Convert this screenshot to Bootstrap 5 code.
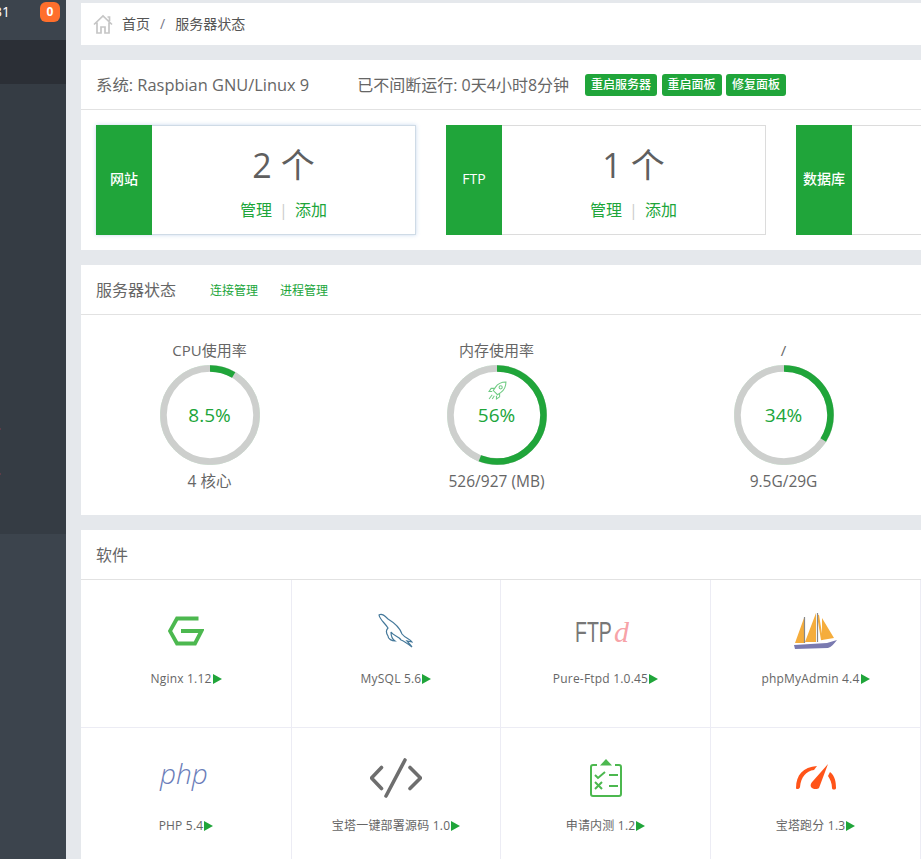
<!DOCTYPE html>
<html lang="zh">
<head>
    <meta charset="UTF-8">
    <title>服务器状态</title>
    <link href="https://cdn.jsdelivr.net/npm/bootstrap@5.3.3/dist/css/bootstrap.min.css" rel="stylesheet">
    <style>
        html, body { height: 859px; overflow: hidden; }
        body {
            background: #e5e8ec;
            color: #555;
            font-family: "Open Sans", "Noto Sans", "Noto Sans CJK SC", sans-serif;
            font-size: 14px;
            line-height: 20px;
        }
        .side-bar { width: 66px; height: 859px; background: #353c44; flex: none; position: relative; }
        .side-top { height: 40px; background: #3c444d; color: #fff; position: relative; overflow: hidden; }
        .side-num { position: absolute; left: -6px; top: 2px; font-size: 14px; }
        .side-badge { position: absolute; left: 40px; top: 2px; width: 20px; height: 20px; border-radius: 6px; background: #ff6f2c; font-size: 12px; font-weight: 700; line-height: 20px; text-align: center; }
        .side-active { height: 44px; background: #2b2f36; }
        .side-mid { height: 450px; }
        .side-low { height: 325px; background: #3c444d; }
        .side-dot { position: absolute; left: 0; width: 1px; height: 2px; background: #5c3c48; }
        .side-dot-a { top: 428px; }
        .side-dot-b { top: 473px; }
        .main-wrap { width: 840px; margin-left: 15px; padding-top: 3px; flex: none; }
        .crumb-bar { height: 42px; background: #fff; margin-bottom: 15px; padding-left: 12px; font-size: 14px; color: #555; }
        .crumb-home { margin-right: 9px; }
        .crumb-sep { color: #778; margin: 0 10px; }
        .sheet { background: #fff; margin-bottom: 15px; }
        .sheet-head { height: 50px; border-bottom: 1px solid #e2e2e2; padding-left: 15px; font-size: 16px; color: #666; }
        .sys-name { font-size: 16.4px; }
        .up-gap { margin-left: 48px; }
        .act-btn { background: #20a53a; color: #fff; font-size: 12px; font-weight: 500; line-height: 22px; height: 22px; padding: 0 6px; border-radius: 3px; margin-right: 4.5px; }
        .act-first { margin-left: 16px; }
        .stat-row { padding: 15px; gap: 30px; height: 140px; width: 1100px; }
        .stat-box { width: 320px; height: 110px; border: 1px solid #dcdcdc; flex: none; }
        .stat-hot { border-color: #cfdbe6; box-shadow: 0 0 4px rgba(130,170,220,.45); }
        .stat-tag { width: 56px; height: 110px; margin: -1px 0 0 -1px; padding-bottom: 2px; background: #20a53a; color: #fff; font-size: 14px; font-weight: 500; flex: none; }
        .stat-body { flex: 1; text-align: center; }
        .stat-num { font-size: 34px; line-height: 40px; color: #5f5f5f; margin-top: 19px; }
        .stat-links { margin-top: 15px; font-size: 16px; line-height: 20px; color: #20a53a; }
        .stat-sep { color: #ccc; margin: 0 7px; font-size: 16px; }
        .head-link { color: #20a53a; font-size: 12px; margin-left: 22px; margin-top: 2px; }
        .head-link-first { margin-left: 34px; }
        .gauge-row { height: 200px; padding-top: 25px; }
        .gauge-cell { width: 287px; text-align: center; flex: none; color: #666; font-size: 15px; }
        .gauge-first { margin-left: -15px; }
        .gauge-ring { width: 100px; height: 100px; position: relative; margin: 5px auto 6px; }
        .gauge-val { position: absolute; inset: 0; display: flex; align-items: center; justify-content: center; color: #20a53a; font-size: 19px; }
        .gauge-rocket { position: absolute; left: 41px; top: 16px; }
        .gauge-foot { font-size: 15.5px; }
        .soft-grid { display: grid; grid-template-columns: 211px 209px 210px 210px; }
        .soft-cell { height: 148px; border-right: 1px solid #ececf4; border-bottom: 1px solid #ececf4; text-align: center; font-size: 12px; letter-spacing: .2px; color: #666; padding-top: 28px; }
        .soft-cell:nth-child(n+5) { padding-top: 27px; }
        .soft-icon { height: 46px; display: flex; align-items: center; justify-content: center; }
        .soft-name { margin-top: 15px; line-height: 20px; }
        .soft-arrow { display: inline-block; width: 0; height: 0; border-left: 9px solid #20a53a; border-top: 5.5px solid transparent; border-bottom: 5.5px solid transparent; vertical-align: -1px; margin-left: 1px; }
        .sheet-last { margin-bottom: 0; }
        .logo-ftp { font-family: "Liberation Sans", sans-serif; font-size: 30px; letter-spacing: 0; fill: #777; }
        .logo-d { font-family: "Liberation Serif", serif; font-style: italic; font-size: 30px; letter-spacing: 0; fill: #f58a90; fill-opacity: .8; }
        .logo-php { font-family: "Open Sans", sans-serif; font-style: italic; font-weight: 300; font-size: 28px; letter-spacing: 0; fill: #6a7db9; }
    </style>
</head>
<body>
<div class="d-flex">
    <div class="side-bar">
        <div class="side-top"><span class="side-num">31</span><span class="side-badge">0</span></div>
        <div class="side-active"></div>
        <div class="side-mid"></div>
        <div class="side-low"></div>
        <span class="side-dot side-dot-a"></span><span class="side-dot side-dot-b"></span>
    </div>
    <div class="main-wrap">
        <div class="crumb-bar d-flex align-items-center">
            <svg class="crumb-home" width="20" height="20" viewBox="0 0 20 20" fill="none" stroke="#c6c6c6" stroke-width="1.700"><path d="M1 10.500 10 2l9 8.500M4 8.500V19h4v-6h4v6h4V8.500M14.500 3h2v4"/></svg>
            <span>首页</span><span class="crumb-sep">/</span><span>服务器状态</span>
        </div>
        <div class="sheet overflow-hidden">
            <div class="sheet-head d-flex align-items-center">
                <span class="sys-name">系统: Raspbian GNU/Linux 9</span>
                <span class="up-gap">已不间断运行: 0天4小时8分钟</span>
                <span class="act-btn act-first">重启服务器</span><span class="act-btn">重启面板</span><span class="act-btn">修复面板</span>
            </div>
            <div class="stat-row d-flex">
                <div class="stat-box stat-hot d-flex">
                    <div class="stat-tag d-flex align-items-center justify-content-center">网站</div>
                    <div class="stat-body">
                        <div class="stat-num">2 个</div>
                        <div class="stat-links">管理<span class="stat-sep">|</span>添加</div>
                    </div>
                </div>
                <div class="stat-box d-flex">
                    <div class="stat-tag d-flex align-items-center justify-content-center">FTP</div>
                    <div class="stat-body">
                        <div class="stat-num">1 个</div>
                        <div class="stat-links">管理<span class="stat-sep">|</span>添加</div>
                    </div>
                </div>
                <div class="stat-box d-flex">
                    <div class="stat-tag d-flex align-items-center justify-content-center">数据库</div>
                    <div class="stat-body"></div>
                </div>
            </div>
        </div>
        <div class="sheet">
            <div class="sheet-head d-flex align-items-center">
                <span>服务器状态</span>
                <span class="head-link head-link-first">连接管理</span>
                <span class="head-link">进程管理</span>
            </div>
            <div class="gauge-row d-flex">
                <div class="gauge-cell gauge-first">
                    <div>CPU使用率</div>
                    <div class="gauge-ring">
                        <svg width="100" height="100" viewBox="0 0 100 100"><circle cx="50" cy="50" r="49.700" fill="none" stroke="#a9d6b3" stroke-width=".6"/><circle cx="50" cy="50" r="46.500" fill="none" stroke="#cdcfcd" stroke-width="6.500"/><circle cx="50" cy="50" r="46.500" fill="none" stroke="#20a53a" stroke-width="6.500" pathLength="100" stroke-dasharray="8.500 91.500" transform="rotate(-90 50 50)"/></svg>
                        <div class="gauge-val">8.5%</div>
                    </div>
                    <div class="gauge-foot">4 核心</div>
                </div>
                <div class="gauge-cell">
                    <div>内存使用率</div>
                    <div class="gauge-ring">
                        <svg width="100" height="100" viewBox="0 0 100 100"><circle cx="50" cy="50" r="49.700" fill="none" stroke="#a9d6b3" stroke-width=".6"/><circle cx="50" cy="50" r="46.500" fill="none" stroke="#cdcfcd" stroke-width="6.500"/><circle cx="50" cy="50" r="46.500" fill="none" stroke="#20a53a" stroke-width="6.500" pathLength="100" stroke-dasharray="56 44" transform="rotate(-90 50 50)"/></svg>
                        <svg class="gauge-rocket" width="19" height="19" viewBox="0 0 18 18" fill="none" stroke="#6fcb83" stroke-width="1"><path d="M17 1c-5 0-8 2-10 5l-2 3 4 4 3-2c3-2 5-5 5-10zM6 7H3L1 10h3M11 12v3l-3 2v-3M4 13l-3 4M6 14l-2 3"/><circle cx="12" cy="6" r="1.500"/></svg>
                        <div class="gauge-val">56%</div>
                    </div>
                    <div class="gauge-foot">526/927 (MB)</div>
                </div>
                <div class="gauge-cell">
                    <div>/</div>
                    <div class="gauge-ring">
                        <svg width="100" height="100" viewBox="0 0 100 100"><circle cx="50" cy="50" r="49.700" fill="none" stroke="#a9d6b3" stroke-width=".6"/><circle cx="50" cy="50" r="46.500" fill="none" stroke="#cdcfcd" stroke-width="6.500"/><circle cx="50" cy="50" r="46.500" fill="none" stroke="#20a53a" stroke-width="6.500" pathLength="100" stroke-dasharray="34 66" transform="rotate(-90 50 50)"/></svg>
                        <div class="gauge-val">34%</div>
                    </div>
                    <div class="gauge-foot">9.5G/29G</div>
                </div>
            </div>
        </div>
        <div class="sheet sheet-last">
            <div class="sheet-head d-flex align-items-center">软件</div>
            <div class="soft-grid">
                <div class="soft-cell">
                    <div class="soft-icon"><svg width="36" height="30" viewBox="0 0 36 30" fill="none" stroke="#4cb84f" stroke-width="3.800"><path d="M30.500 2.500H9L2 15l7 12.500h18L33.500 15H13"/></svg></div>
                    <div class="soft-name">Nginx 1.12<span class="soft-arrow"></span></div>
                </div>
                <div class="soft-cell">
                    <div class="soft-icon"><svg width="38" height="36" viewBox="0 0 38 36" fill="none" stroke="#44789a" stroke-width="1.200"><path d="M2 2c3-2 6 1 9 4 5 3 12 9 14 15 3 4 8 5 10 8l-5-1 5 6c-4-3-8-6-11-7-2-4-8-4-10-8 0 3 1 7 4 9-3 0-7-2-7-5-2-3-2-6 0-8C8 10 3 7 2 2z"/></svg></div>
                    <div class="soft-name">MySQL 5.6<span class="soft-arrow"></span></div>
                </div>
                <div class="soft-cell">
                    <div class="soft-icon"><svg width="62" height="42" viewBox="0 0 62 42"><text class="logo-ftp" transform="translate(0 32) scale(.65 1)">FTP</text><text class="logo-d" x="39" y="32">d</text></svg></div>
                    <div class="soft-name">Pure-Ftpd 1.0.45<span class="soft-arrow"></span></div>
                </div>
                <div class="soft-cell">
                    <div class="soft-icon"><svg width="44" height="38" viewBox="0 0 44 38"><path d="M1 31 10 6v25zM11 30 22 1v29zM28 6l12 20-12 2z" fill="#f5ad3c"/><path d="M24 3l4 25" stroke="#f5ad3c" stroke-width="2"/><path d="M10.500 5v26M23.500 1v29" stroke="#888" stroke-width="1.200"/><path d="M0 33l33-2 10-3c-3 4-6 7-9 8l-33 1z" fill="#7a7ab0"/></svg></div>
                    <div class="soft-name">phpMyAdmin 4.4<span class="soft-arrow"></span></div>
                </div>
                <div class="soft-cell">
                    <div class="soft-icon"><svg width="60" height="42" viewBox="0 0 60 42"><text class="logo-php" x="4" y="27">php</text></svg></div>
                    <div class="soft-name">PHP 5.4<span class="soft-arrow"></span></div>
                </div>
                <div class="soft-cell">
                    <div class="soft-icon"><svg width="52" height="40" viewBox="0 0 52 40" fill="none" stroke="#6e6e6e" stroke-width="3.600" stroke-linecap="round"><path d="M11.500 9.500 1.500 20l10 10.500M40 9.500 50.500 20 40 30.500M35 2 16 38"/></svg></div>
                    <div class="soft-name">宝塔一键部署源码 1.0<span class="soft-arrow"></span></div>
                </div>
                <div class="soft-cell">
                    <div class="soft-icon"><svg width="32" height="40" viewBox="0 0 32 40" fill="none" stroke="#4cb84f" stroke-width="2"><path d="M7 7H3a2 2 0 0 0-2 2v27a2 2 0 0 0 2 2h26a2 2 0 0 0 2-2V9a2 2 0 0 0-2-2h-4M5 17l3 3 7-6M19 17h9M5 24l7 7M12 24l-7 7M19 28h9"/><path d="M10 7.500h12l-6-6.500z" fill="#4cb84f" stroke="none"/></svg></div>
                    <div class="soft-name">申请内测 1.2<span class="soft-arrow"></span></div>
                </div>
                <div class="soft-cell">
                    <div class="soft-icon"><svg width="42" height="28" viewBox="0 0 42 28" fill="#ff5419"><path d="M1 24C1 11 8 3 22 2l-3 4C11 7 6 13 5 23c0 2-4 3-4 1zM41 24c0-6-1-12-6-16l-2 4c2 3 4 7 4 12 0 2 4 2 4 0z"/><path d="M33 0 24 24c-2 2-7 1-8-1-1-2 0-4 2-6z"/></svg></div>
                    <div class="soft-name">宝塔跑分 1.3<span class="soft-arrow"></span></div>
                </div>
            </div>
        </div>
    </div>
</div>
<script src="https://cdn.jsdelivr.net/npm/bootstrap@5.3.3/dist/js/bootstrap.bundle.min.js"></script>
</body>
</html>
